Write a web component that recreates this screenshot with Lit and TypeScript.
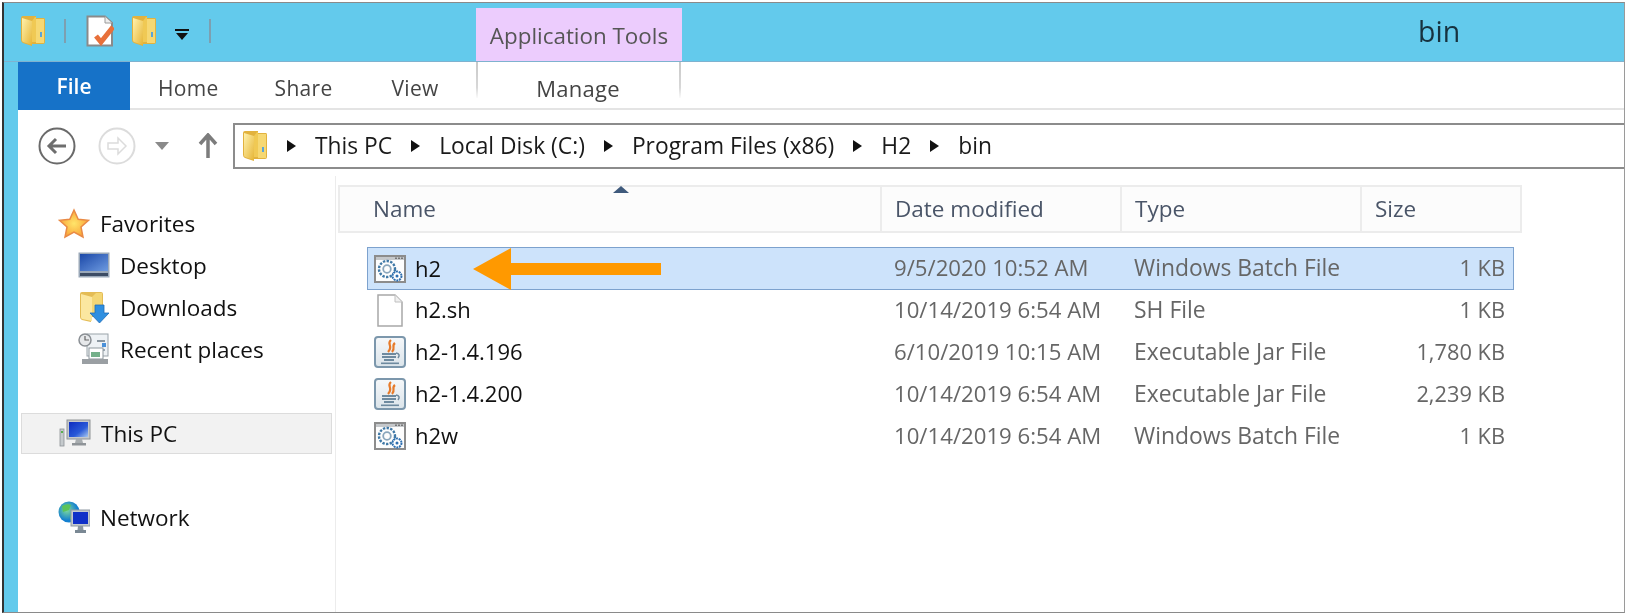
import { LitElement, html, css, svg } from "lit";
import { customElement } from "lit/decorators.js";

const folder = (w: number, h: number) => html`<svg class="ic" width=${w} height=${h} viewBox="0 0 26 32">
  <defs><linearGradient id="fg" x1="0" x2="1" y1="0" y2="1"><stop offset="0" stop-color="#fff2ae"/><stop offset="1" stop-color="#e6b536"/></linearGradient></defs>
  <path d="M1 3 Q1 1 3 1 H16 V3 H24 Q25 3 25 5 V27 Q25 29 23 29 H12 L12 31 L3 28 Q1 27 1 25 Z" fill="#e2b23e"/>
  <path d="M2 3 L12 6 V30 L3 27 Q2 26.5 2 25 Z" fill="url(#fg)"/>
  <path d="M12 6 L15 2 H16 V27 H12 Z" fill="#f0c954"/>
  <rect x="16" y="4" width="8" height="24" fill="#f6d873"/>
  <rect x="20" y="17" width="2" height="5" fill="#5aa4d8"/>
</svg>`;

const docCheck = html`<svg class="ic" width="28" height="32" viewBox="0 0 28 32">
  <path d="M1.500 1.500 H19 L26 8 V30.500 H1.500 Z" fill="#fff" stroke="#8a8a8a" stroke-width="2"/>
  <path d="M19 1.500 V8 H26" fill="#eee" stroke="#9a9a9a"/>
  <path d="M10 21 L15 27 L27 12" fill="none" stroke="#e8703a" stroke-width="5"/>
</svg>`;

const star = html`<svg class="ic" width="32" height="31" viewBox="0 0 32 31">
  <defs><radialGradient id="st"><stop offset="0" stop-color="#ffe56a"/><stop offset="1" stop-color="#f9a63a"/></radialGradient></defs>
  <path d="M16 2 L20.200 11.200 L30.500 12.300 L23 19 L25 29 L16 24 L7 29 L9 19 L1.500 12.300 L11.800 11.200 Z" fill="url(#st)" stroke="#e98a45" stroke-width="1.500"/>
</svg>`;

const desktop = html`<svg class="ic" width="32" height="26" viewBox="0 0 32 26">
  <defs><linearGradient id="dk" x1="0" x2="1" y1="0" y2="1"><stop offset="0" stop-color="#1b48a8"/><stop offset="1" stop-color="#6d9ae0"/></linearGradient></defs>
  <rect x="0.500" y="0.500" width="31" height="25" fill="#9aa8b8"/>
  <rect x="2" y="2" width="28" height="17" fill="url(#dk)"/>
  <rect x="2" y="21" width="28" height="3" fill="#3c4c64"/>
</svg>`;

const downloads = html`<svg class="ic" width="31" height="32" viewBox="0 0 31 32">
  <path d="M1 3 Q1 1 3 1 H22 Q24 1 24 3 V26 H12 V31 L3 29 Q1 28 1 26 Z" fill="#e4bc55"/>
  <path d="M2 3 L13 6 V30 L3 28 Q2 27.500 2 26 Z" fill="#fbe7a0"/>
  <path d="M13 6 L17 2 H23 V24 H13 Z" fill="#f3d675"/>
  <path d="M16 14 H25 V22 H30 L20.500 32 L11 22 H16 Z" fill="#2f8fe0" stroke="#1e6cb8" stroke-width=".8"/>
</svg>`;

const recent = html`<svg class="ic" width="32" height="32" viewBox="0 0 32 32">
  <rect x="9" y="1" width="21" height="22" fill="#eef2f5" stroke="#9aa3aa"/>
  <rect x="19" y="7" width="8" height="2" fill="#8a96a0"/><rect x="24" y="10" width="4" height="4" fill="#4a90d8"/>
  <rect x="19" y="16" width="8" height="2" fill="#9aa6b0"/>
  <circle cx="7" cy="7" r="6" fill="#e6e8ea" stroke="#8a8f94" stroke-width="1.500"/>
  <path d="M7 3 V7 H11" fill="none" stroke="#666" stroke-width="1.200"/>
  <rect x="11" y="15" width="14" height="11" fill="#fff" stroke="#8e979e"/>
  <rect x="13" y="19" width="9" height="5" fill="#74b08a"/>
  <rect x="4" y="26" width="26" height="5" fill="#9a9fa3"/>
</svg>`;

const monitor = html`<svg class="ic" width="32" height="29" viewBox="0 0 32 29">
  <defs><linearGradient id="mn" x1="0" x2="1" y1="0" y2="1"><stop offset="0" stop-color="#0c2cc0"/><stop offset=".6" stop-color="#2a5ad8"/><stop offset="1" stop-color="#a8c8f0"/></linearGradient></defs>
  <rect x="1" y="10" width="4" height="17" fill="#c5cacd" stroke="#8d9296" stroke-width=".8"/>
  <rect x="2" y="12" width="2" height="2" fill="#58b04c"/>
  <rect x="8" y="1" width="23" height="19" fill="#c5c9cc" stroke="#8f9396"/>
  <rect x="10" y="3" width="19" height="15" fill="url(#mn)"/>
  <path d="M17 20 H23 L24 24 H16 Z" fill="#a8adb0"/><rect x="13" y="24" width="14" height="2.500" fill="#8f9498"/>
</svg>`;

const network = html`<svg class="ic" width="32" height="33" viewBox="0 0 32 33">
  <defs><radialGradient id="gl" cx=".4" cy=".4"><stop offset="0" stop-color="#7fdc9a"/><stop offset="1" stop-color="#1480d0"/></radialGradient></defs>
  <circle cx="11" cy="11" r="10.500" fill="url(#gl)"/>
  <path d="M4 5 Q9 2 13 4 L11 9 L5 11 Z M13 12 L19 14 L15 20 L12 18 Z" fill="#5cc45a"/>
  <rect x="13" y="9" width="19" height="16" fill="#c3c9ce" stroke="#8f9aa3"/>
  <rect x="15" y="11" width="15" height="12" fill="#1030c8"/>
  <path d="M20 25 H25 L25.500 29 H19.500 Z" fill="#8b97a2"/><rect x="17" y="29" width="11" height="3" fill="#7a8894"/>
</svg>`;

const batIcon = html`<svg class="ic" width="32" height="28" viewBox="0 0 32 28">
  <rect x="1" y="1" width="30" height="26" fill="#fdfdfd" stroke="#8c8c8c" stroke-width="2"/>
  <rect x="2" y="2" width="28" height="3" fill="#c5c8cb"/>
  <rect x="21" y="2.500" width="2" height="1.500" fill="#777"/><rect x="24" y="2.500" width="2" height="1.500" fill="#777"/><rect x="27" y="2.500" width="2" height="1.500" fill="#777"/>
  <circle cx="13" cy="14" r="8" fill="none" stroke="#3f78a6" stroke-width="2.400" stroke-dasharray="2.400 1.300"/>
  <circle cx="13" cy="14" r="3.800" fill="none" stroke="#8aa6bc" stroke-width="1.800"/>
  <circle cx="23" cy="21" r="4.500" fill="#fff" stroke="#2e6fb0" stroke-width="2" stroke-dasharray="2 .8"/>
  <circle cx="23" cy="21" r="1.500" fill="#2e6fb0"/>
</svg>`;

const shIcon = html`<svg class="ic" width="26" height="33" viewBox="0 0 26 33">
  <path d="M1 1 H18 L25 8 V32 H1 Z" fill="#fff" stroke="#a8a8a8" stroke-width="1.500"/>
  <path d="M18 1 V8 H25" fill="#f0f0f0" stroke="#c0c0c0"/>
</svg>`;

const jarIcon = html`<svg class="ic" width="32" height="32" viewBox="0 0 32 32">
  <defs><linearGradient id="jr" x1="0" x2="0" y1="0" y2="1"><stop offset="0" stop-color="#f6f8fa"/><stop offset="1" stop-color="#dbe4ea"/></linearGradient></defs>
  <rect x="1" y="1" width="30" height="30" rx="3" fill="url(#jr)" stroke="#7c97ac" stroke-width="2"/>
  <path d="M17 4 C12 8 20 10 14 16 M21 7 C17 10 22 12 18 16" fill="none" stroke="#e77b2a" stroke-width="2.200"/>
  <path d="M8 18 H22 M8 21 H22 M10 24 H20" stroke="#6e8a9f" stroke-width="1.800"/>
  <path d="M22 17 Q27 18 24 22" fill="none" stroke="#6e8a9f" stroke-width="1.500"/>
  <rect x="7" y="26.500" width="18" height="1.600" fill="#6e8a9f"/>
</svg>`;

const crumbs = ["This PC", "Local Disk (C:)", "Program Files (x86)", "H2", "bin"];
const files = [
  { n: "h2", d: "9/5/2020 10:52 AM", t: "Windows Batch File", s: "1 KB", i: batIcon, sel: true },
  { n: "h2.sh", d: "10/14/2019 6:54 AM", t: "SH File", s: "1 KB", i: shIcon },
  { n: "h2-1.4.196", d: "6/10/2019 10:15 AM", t: "Executable Jar File", s: "1,780 KB", i: jarIcon },
  { n: "h2-1.4.200", d: "10/14/2019 6:54 AM", t: "Executable Jar File", s: "2,239 KB", i: jarIcon },
  { n: "h2w", d: "10/14/2019 6:54 AM", t: "Windows Batch File", s: "1 KB", i: batIcon },
];

@customElement("app-root")
export class AppRoot extends LitElement {
  static styles = css`
    :host { display: block; width: 1626px; height: 614px; background: #fff; padding: 2px 1px 1px 2px; box-sizing: border-box;
      font-family: "Open Sans", "Noto Sans", sans-serif; font-size: 22.5px; color: #111; overflow: hidden; }
    * { box-sizing: border-box; }
    .ic { display: block; flex: none; }
    .win { height: 100%; border-top: 1px solid #8a8a8a; border-left: 2px solid #333; border-right: 1px solid #9a9a9a; border-bottom: 1px solid #8a8a8a;
      background: #63caec; display: flex; flex-direction: column; filter: blur(0.45px); }
    .title { height: 59px; flex: none; display: flex; border-bottom: 1px solid #7fb2cf; }
    .qat { width: 472px; flex: none; display: flex; align-items: center; padding: 0 0 2px 16px; }
    .qsep { width: 2px; height: 24px; background: #7d9fb0; }
    .drop { display: flex; flex-direction: column; align-items: center; gap: 2px; margin: 6px 0 0 18px; }
    .drop i { display: block; width: 14px; height: 2px; background: #111; }
    .drop b { display: block; width: 0; border: 6px solid transparent; border-top: 7px solid #111; border-bottom: 0; }
    .ctx { width: 206px; flex: none; margin-top: 5px; background: #ecccfd; color: #555; display: flex; justify-content: center; padding-top: 10px; font-size: 22.4px; line-height: 36px; white-space: nowrap; }
    .wname { margin-left: 736px; font-size: 28.5px; color: #17323f; line-height: 56px; }
    .main { flex: 1; background: #fff; margin-left: 14px; display: flex; flex-direction: column; min-height: 0; }
    .ribbon { height: 48px; flex: none; display: flex; border-bottom: 2px solid #e4e4e4; align-items: stretch; }
    .tab { padding: 0 28px; line-height: 52px; color: #444; font-size: 21px; letter-spacing: .3px; }
    .tab.view { margin-left: 3px; }
    .tab.file { width: 112px; padding: 0; text-align: center; background: #1672c8; color: #fff; font-weight: 600; line-height: 48px; margin-bottom: -2px; letter-spacing: 0; }
    .tab.manage { width: 205px; padding: 0; text-align: center; margin-left: 9px; height: 36px; border-style: solid; border-width: 0 2px; border-image: linear-gradient(#c8c8c8, #d8d8d8 70%, #fff) 1; font-size: 22px; }
    .nav { height: 66px; flex: none; display: flex; align-items: center; padding-top: 5px; }
    .navbtns { width: 215px; flex: none; display: flex; align-items: center; padding-left: 20px; }
    .addr { flex: 1; height: 46px; border: solid #8c8c8c; border-width: 2px 0 2px 2px; display: flex; align-items: center; padding-left: 7px; color: #1a1a1a; font-size: 22.8px; }
    .tri { width: 0; flex: none; border: 6px solid transparent; border-left: 9px solid #111; border-right: 0; margin: 0 19px; }
    .body { flex: 1; display: flex; min-height: 0; }
    .side { width: 318px; flex: none; border-right: 1px solid #ececec; padding-top: 26px; display: flex; flex-direction: column; }
    .si { display: flex; align-items: center; height: 42px; color: #111; }
    .si.top { padding-left: 40px; gap: 10px; }
    .si.sub { padding-left: 60px; }
    .si.sub .lab { margin-left: 10px; }
    .si .box { width: 32px; display: flex; justify-content: center; flex: none; }
    .si.pc { margin: 43px 3px 0; padding-left: 37px; height: 41px; background: #f2f2f2; border: 1px solid #dcdcdc; }
    .si.net { margin-top: 42px; }
    .list { flex: 1; padding: 9px 0 0 2px; position: relative; }
    .hdr { width: 1184px; height: 48px; display: grid; grid-template-columns: 540px 240px 240px 1fr; border: 2px solid #ececec; background: #fcfcfc; color: #4a5568; font-size: 22.5px; line-height: 44px; }
    .hdr div { padding-left: 13px; border-left: 2px solid #ececec; }
    .hdr div:first-child { padding-left: 33px; border: 0; position: relative; }
    .sort { position: absolute; left: 273px; top: -1px; width: 0; border: 8px solid transparent; border-bottom: 7px solid #3f5a7c; border-top: 0; }
    .rows { margin: 14px 0 0 29px; width: 1147px; display: flex; flex-direction: column; }
    .row { height: 42px; display: grid; grid-template-columns: 514px 240px 241px 1fr; align-items: center; }
    .row.sel { background: #cde3fb; outline: 1px solid #7da2ce; outline-offset: -1px; height: 43px; margin-bottom: -1px; }
    .nm { display: flex; align-items: center; font-size: 22px; line-height: 28px; }
    .nm .box { width: 32px; margin: 0 9px 0 7px; display: flex; justify-content: center; flex: none; }
    .nm .tx { margin-bottom: 2px; }
    .dim { color: #666; padding: 0 0 2px 13px; white-space: nowrap; }
    .date { font-size: 22.2px; }
    .type { font-size: 22.9px; }
    .sz { color: #666; text-align: right; padding: 0 9px 2px 0; white-space: nowrap; font-size: 21.8px; }
    .arrow { position: absolute; left: 137px; top: 71px; }
  `;

  render() {
    return html`<div class="win">
      <div class="title">
        <div class="qat">
          ${folder(26, 32)}
          <div class="qsep" style="margin-left:18px"></div>
          <div style="margin-left:20px">${docCheck}</div>
          <div style="margin-left:17px">${folder(26, 32)}</div>
          <div class="drop"><i></i><b></b></div>
          <div class="qsep" style="margin-left:20px"></div>
        </div>
        <div class="ctx">Application Tools</div>
        <div class="wname">bin</div>
      </div>
      <div class="main">
        <div class="ribbon">
          <div class="tab file">File</div>
          <div class="tab">Home</div>
          <div class="tab">Share</div>
          <div class="tab view">View</div>
          <div class="tab manage">Manage</div>
        </div>
        <div class="nav">
          <div class="navbtns">
            <svg class="ic" width="38" height="38" viewBox="0 0 38 38"><circle cx="19" cy="19" r="17.500" fill="#fff" stroke="#6a6a6a" stroke-width="2"/><path d="M28 19 H12 M18 12 L11 19 L18 26" fill="none" stroke="#6e6e6e" stroke-width="3"/></svg>
            <svg class="ic" style="margin-left:22px" width="38" height="38" viewBox="0 0 38 38"><circle cx="19" cy="19" r="17.500" fill="#fff" stroke="#dcdcdc" stroke-width="2"/><path d="M10 16 H20 V11 L28 19 L20 27 V22 H10 Z" fill="none" stroke="#dcdcdc" stroke-width="1.500"/></svg>
            <svg class="ic" style="margin-left:18px" width="16" height="10" viewBox="0 0 16 10"><path d="M1 1 H15 L8 9 Z" fill="#8a8a8a"/></svg>
            <svg class="ic" style="margin-left:28px" width="20" height="26" viewBox="0 0 20 26"><path d="M10 25 V3 M2 11 L10 2 L18 11" fill="none" stroke="#7c7c7c" stroke-width="3.500"/></svg>
          </div>
          <div class="addr">
            ${folder(26, 32)}
            ${crumbs.map((c) => html`<span class="tri"></span><span>${c}</span>`)}
          </div>
        </div>
        <div class="body">
          <div class="side">
            <div class="si top">${star}<span>Favorites</span></div>
            <div class="si sub"><span class="box">${desktop}</span><span class="lab">Desktop</span></div>
            <div class="si sub"><span class="box">${downloads}</span><span class="lab">Downloads</span></div>
            <div class="si sub"><span class="box">${recent}</span><span class="lab">Recent places</span></div>
            <div class="si top pc">${monitor}<span>This PC</span></div>
            <div class="si top net">${network}<span>Network</span></div>
          </div>
          <div class="list">
            <div class="hdr">
              <div>Name<span class="sort"></span></div>
              <div>Date modified</div>
              <div>Type</div>
              <div>Size</div>
            </div>
            <div class="rows">
              ${files.map((f) => html`<div class="row ${f.sel ? "sel" : ""}">
                <div class="nm"><span class="box">${f.i}</span><span class="tx">${f.n}</span></div>
                <div class="dim date">${f.d}</div>
                <div class="dim type">${f.t}</div>
                <div class="sz">${f.s}</div>
              </div>`)}
            </div>
            <svg class="arrow" width="190" height="44" viewBox="0 0 190 44">${svg`<path d="M0 22 L38 1 V16 H188 V28 H38 V43 Z" fill="#ff9900"/>`}</svg>
          </div>
        </div>
      </div>
    </div>`;
  }
}
